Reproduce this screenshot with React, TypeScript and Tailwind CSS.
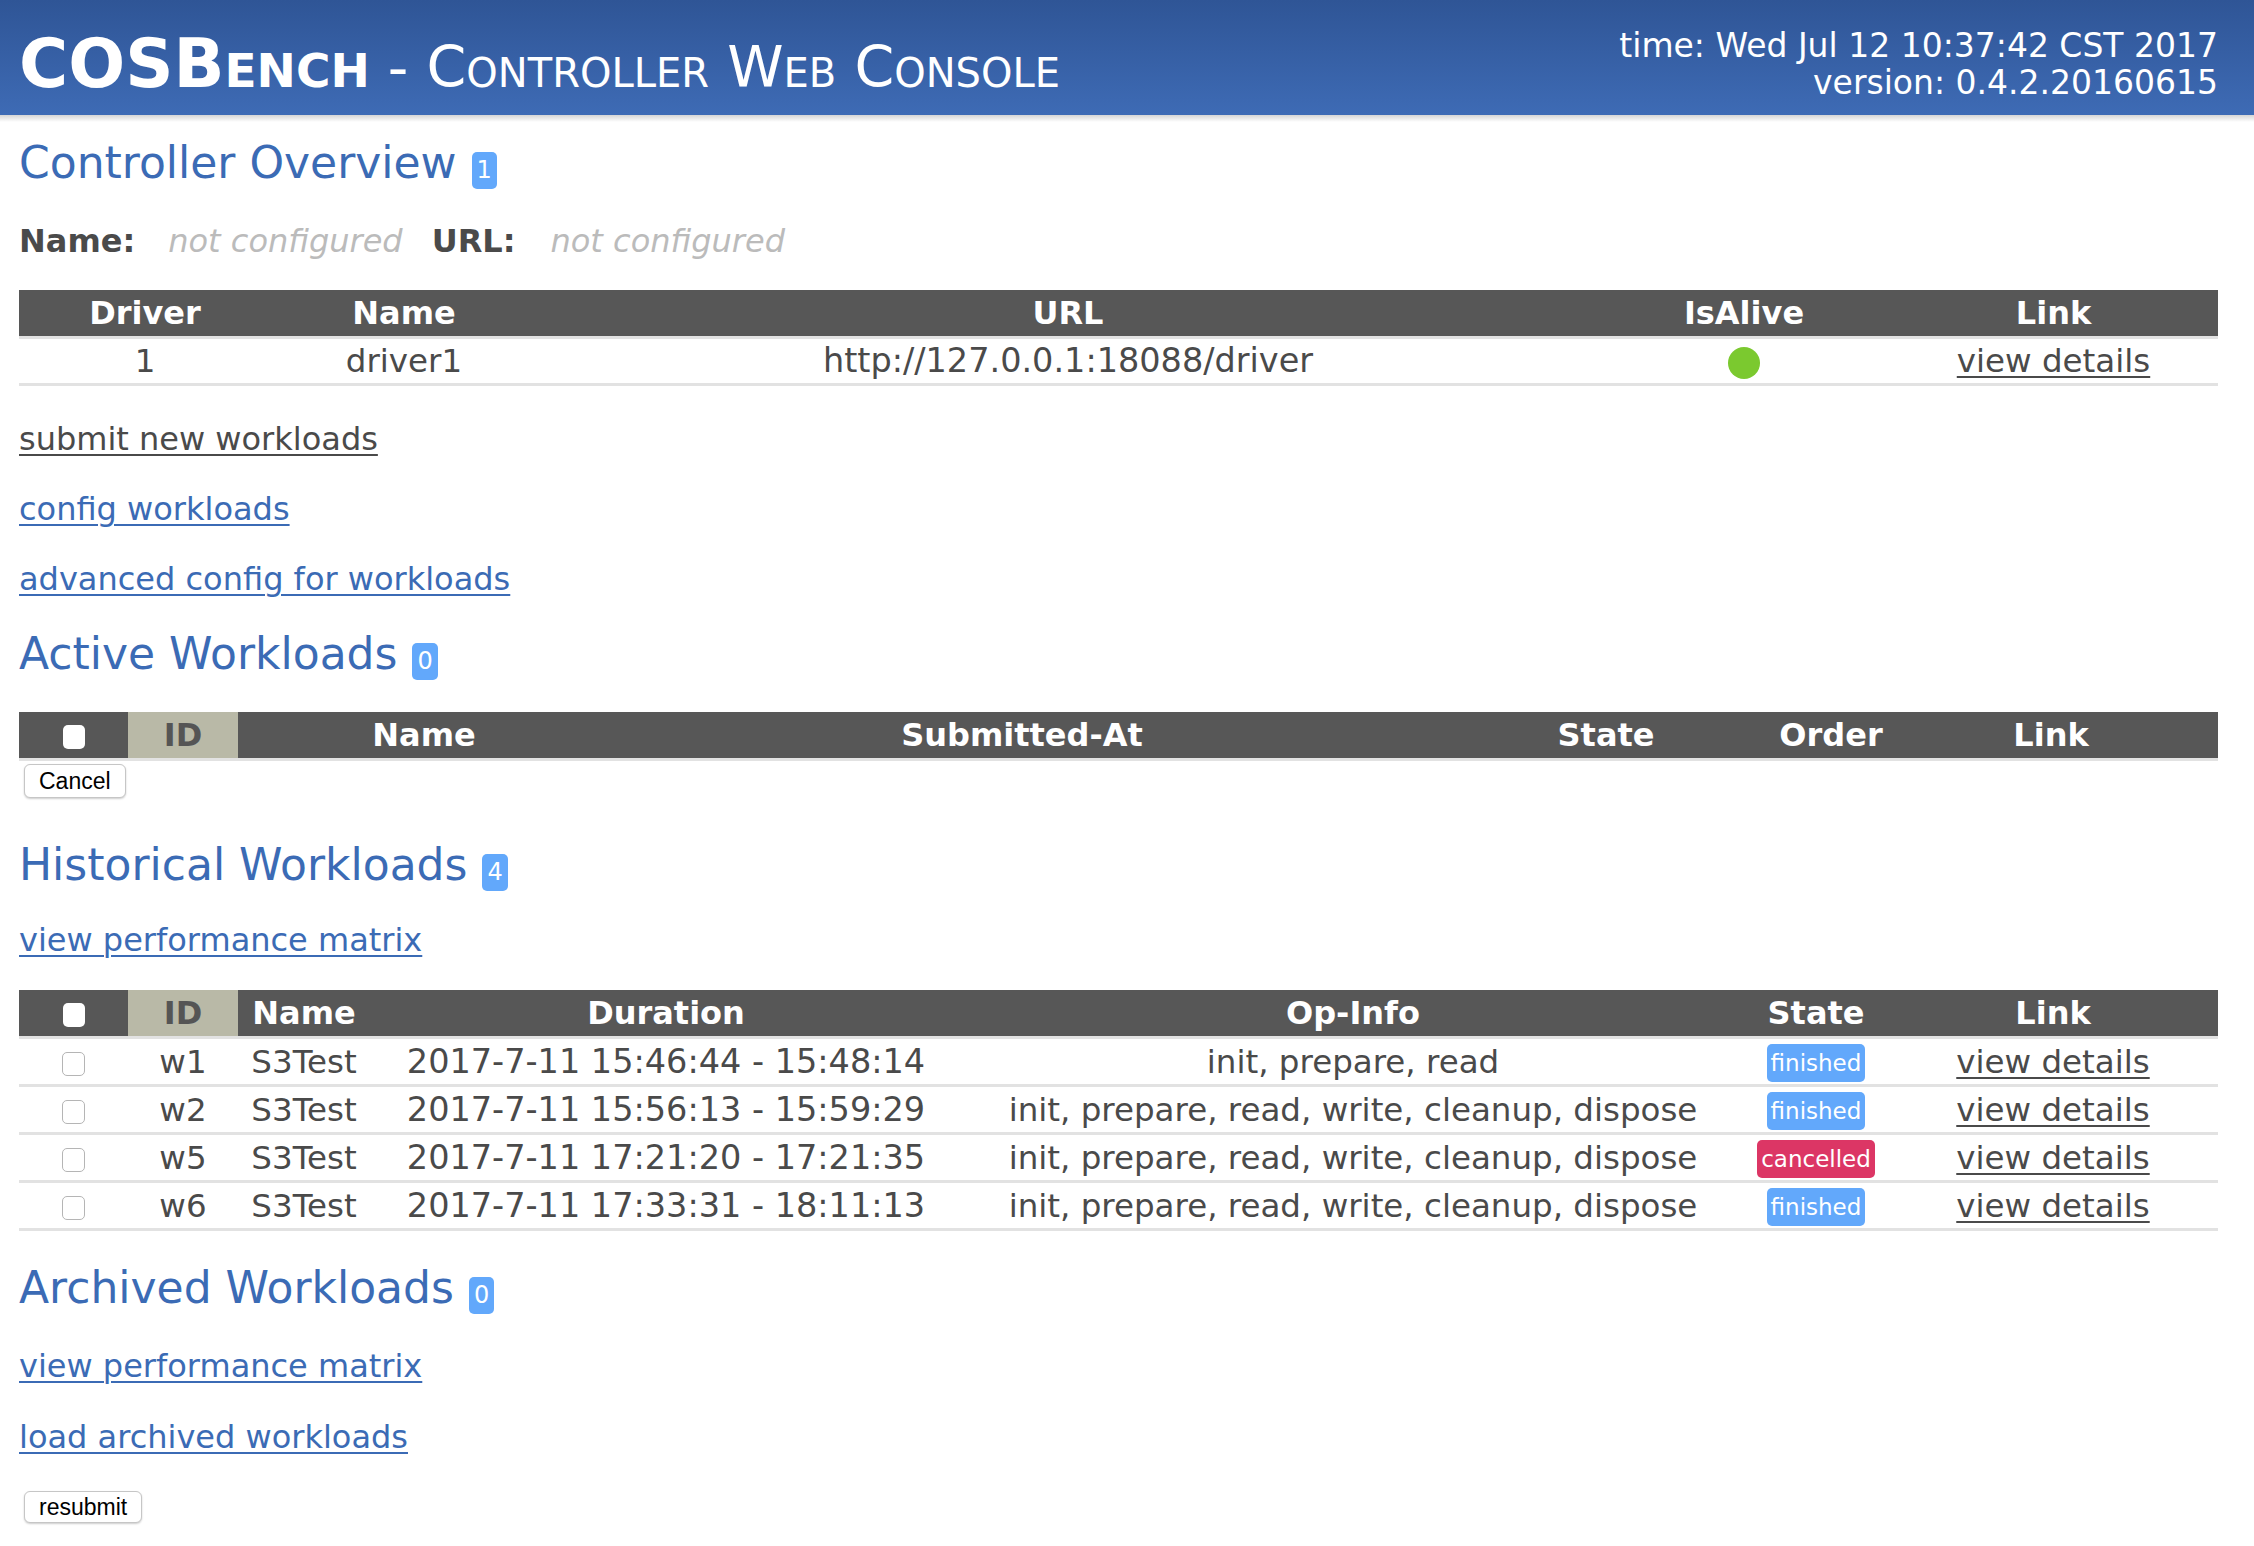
import React from "react";

interface Run {
  id: string;
  name: string;
  duration: string;
  ops: string;
  state: "finished" | "cancelled";
}

const runs: Run[] = [
  { id: "w1", name: "S3Test", duration: "2017-7-11 15:46:44 - 15:48:14", ops: "init, prepare, read", state: "finished" },
  { id: "w2", name: "S3Test", duration: "2017-7-11 15:56:13 - 15:59:29", ops: "init, prepare, read, write, cleanup, dispose", state: "finished" },
  { id: "w5", name: "S3Test", duration: "2017-7-11 17:21:20 - 17:21:35", ops: "init, prepare, read, write, cleanup, dispose", state: "cancelled" },
  { id: "w6", name: "S3Test", duration: "2017-7-11 17:33:31 - 18:11:13", ops: "init, prepare, read, write, cleanup, dispose", state: "finished" },
];

const th =
  "h-[49px] p-0 bg-[#575757] text-center text-[32px] font-bold leading-[46px] text-white border-b-[3px] border-[#e2e2e2]";
const thId =
  "h-[49px] p-0 bg-[#b9b9a7] text-center text-[32px] font-bold leading-[46px] text-[#555555] border-b-[3px] border-[#e2e2e2]";
const td = "p-0 text-center text-[32.5px] leading-[40px] border-b-[3px] border-[#e2e2e2] whitespace-nowrap";

function Badge({ n }: { n: number }) {
  return (
    <span className="ml-[15px] inline-block rounded-[5px] bg-[#62a8fb] px-[5px] align-baseline text-[24px] leading-[37px] text-white">
      {n}
    </span>
  );
}

function Heading({ title, count, className }: { title: string; count: number; className: string }) {
  return (
    <h2 className={"whitespace-nowrap text-[44px] font-normal leading-[52px] text-[#3b6bb5] " + className}>
      {title}
      <Badge n={count} />
    </h2>
  );
}

function HeadBox() {
  return <span className="inline-block h-[24px] w-[22px] rounded-[5px] bg-white align-middle" />;
}

function RowBox() {
  return (
    <input
      type="checkbox"
      readOnly
      className="inline-block h-[24px] w-[23px] appearance-none rounded-[5px] border border-[#b5b5b5] bg-white align-middle"
    />
  );
}

function StateTag({ state }: { state: Run["state"] }) {
  return (
    <span
      className={
        state === "cancelled"
          ? "inline-block h-[38px] rounded-[5px] bg-[#dc3665] px-[4px] align-middle text-[23px] leading-[38px] text-white"
          : "inline-block h-[38px] rounded-[5px] bg-[#62a8fb] px-[4px] align-middle text-[23px] leading-[38px] text-white"
      }
    >
      {state}
    </span>
  );
}

function PlainLink({ children, blue, className }: { children: React.ReactNode; blue?: boolean; className: string }) {
  return (
    <a
      href="#"
      className={
        (blue ? "text-[#3b6bb5] " : "text-[#4a4a4a] ") +
        "block w-fit leading-[40px] underline decoration-[2px] underline-offset-[4px] " +
        className
      }
    >
      {children}
    </a>
  );
}

export default function App() {
  return (
    <div className="min-h-screen bg-white font-['DejaVu_Sans',sans-serif] text-[32px] text-[#4a4a4a]">
      <header>
        <div className="flex h-[115px] items-start justify-between bg-linear-to-b from-[#2f5596] to-[#3e6bb5] pl-[19px] pr-[36px] text-white">
          <div className="whitespace-nowrap pt-[30px] text-[67px] leading-[68px] [font-variant:small-caps]">
            <span className="font-bold">COSBench</span>
            <span className="text-[57px]"> - Controller Web Console</span>
          </div>
          <div className="pt-[27px] text-right text-[33px] leading-[37px]">
            <div>time: Wed Jul 12 10:37:42 CST 2017</div>
            <div>version: 0.4.2.20160615</div>
          </div>
        </div>
        <div className="h-[7px] bg-linear-to-b from-[#d5d5d5] to-white" />
      </header>

      <main className="pb-[23px] pl-[19px] pr-[36px]">
        <Heading title="Controller Overview" count={1} className="mt-[15px]" />

        <div className="mt-[32px] flex whitespace-nowrap leading-[40px]">
          <span className="font-bold">Name:</span>
          <span className="ml-[33px] italic text-[#bbbbbb]">not configured</span>
          <span className="ml-[29px] font-bold">URL:</span>
          <span className="ml-[35px] italic text-[#bbbbbb]">not configured</span>
        </div>

        <table className="mt-[29px] w-full table-fixed border-separate border-spacing-0">
          <thead>
            <tr>
              <th className={th + " w-[252px]"}>Driver</th>
              <th className={th + " w-[266px]"}>Name</th>
              <th className={th + " w-[1062px]"}>URL</th>
              <th className={th + " w-[290px]"}>IsAlive</th>
              <th className={th + " w-[329px]"}>Link</th>
            </tr>
          </thead>
          <tbody>
            <tr className="h-[47px]">
              <td className={td}>1</td>
              <td className={td}>driver1</td>
              <td className={td + " text-[33.5px]"}>http://127.0.0.1:18088/driver</td>
              <td className={td}>
                <span className="inline-block h-[32px] w-[32px] rounded-full bg-[#7bc92f] align-middle" />
              </td>
              <td className={td}>
                <a href="#" className="underline decoration-[2px] underline-offset-[4px]">
                  view details
                </a>
              </td>
            </tr>
          </tbody>
        </table>

        <PlainLink className="mt-[33px]">submit new workloads</PlainLink>
        <PlainLink blue className="mt-[30px]">config workloads</PlainLink>
        <PlainLink blue className="mt-[30px]">advanced config for workloads</PlainLink>

        <Heading title="Active Workloads" count={0} className="mt-[29px]" />

        <table className="mt-[32px] w-full table-fixed border-separate border-spacing-0">
          <thead>
            <tr>
              <th className={th + " w-[109px]"}>
                <HeadBox />
              </th>
              <th className={thId + " w-[110px]"}>ID</th>
              <th className={th + " w-[372px]"}>Name</th>
              <th className={th + " w-[824px]"}>Submitted-At</th>
              <th className={th + " w-[344px]"}>State</th>
              <th className={th + " w-[106px]"}>Order</th>
              <th className={th + " w-[334px]"}>Link</th>
            </tr>
          </thead>
        </table>
        <button className="ml-[5px] mt-[3px] block h-[34px] rounded-[6px] border border-[#c6c6c6] bg-white px-[14px] font-['Liberation_Sans',Arial,sans-serif] text-[23px] leading-none text-black shadow-[0_1px_2px_rgba(0,0,0,0.2)]">
          Cancel
        </button>

        <Heading title="Historical Workloads" count={4} className="mt-[41px]" />
        <PlainLink blue className="mt-[29px]">view performance matrix</PlainLink>

        <table className="mt-[30px] w-full table-fixed border-separate border-spacing-0">
          <thead>
            <tr>
              <th className={th + " w-[109px]"}>
                <HeadBox />
              </th>
              <th className={thId + " w-[110px]"}>ID</th>
              <th className={th + " w-[132px]"}>Name</th>
              <th className={th + " w-[592px]"}>Duration</th>
              <th className={th + " w-[782px]"}>Op-Info</th>
              <th className={th + " w-[144px]"}>State</th>
              <th className={th + " w-[330px]"}>Link</th>
            </tr>
          </thead>
          <tbody>
            {runs.map((r) => (
              <tr key={r.id} className="h-[48px]">
                <td className={td}>
                  <RowBox />
                </td>
                <td className={td}>{r.id}</td>
                <td className={td}>{r.name}</td>
                <td className={td + " text-[33.5px]"}>{r.duration}</td>
                <td className={td}>{r.ops}</td>
                <td className={td}>
                  <StateTag state={r.state} />
                </td>
                <td className={td}>
                  <a href="#" className="underline decoration-[2px] underline-offset-[4px]">
                    view details
                  </a>
                </td>
              </tr>
            ))}
          </tbody>
        </table>

        <Heading title="Archived Workloads" count={0} className="mt-[31px]" />
        <PlainLink blue className="mt-[32px]">view performance matrix</PlainLink>
        <PlainLink blue className="mt-[31px]">load archived workloads</PlainLink>

        <button className="ml-[5px] mt-[34px] block h-[32px] rounded-[6px] border border-[#c6c6c6] bg-white px-[14px] font-['Liberation_Sans',Arial,sans-serif] text-[23px] leading-none text-black shadow-[0_1px_2px_rgba(0,0,0,0.2)]">
          resubmit
        </button>
      </main>
    </div>
  );
}
